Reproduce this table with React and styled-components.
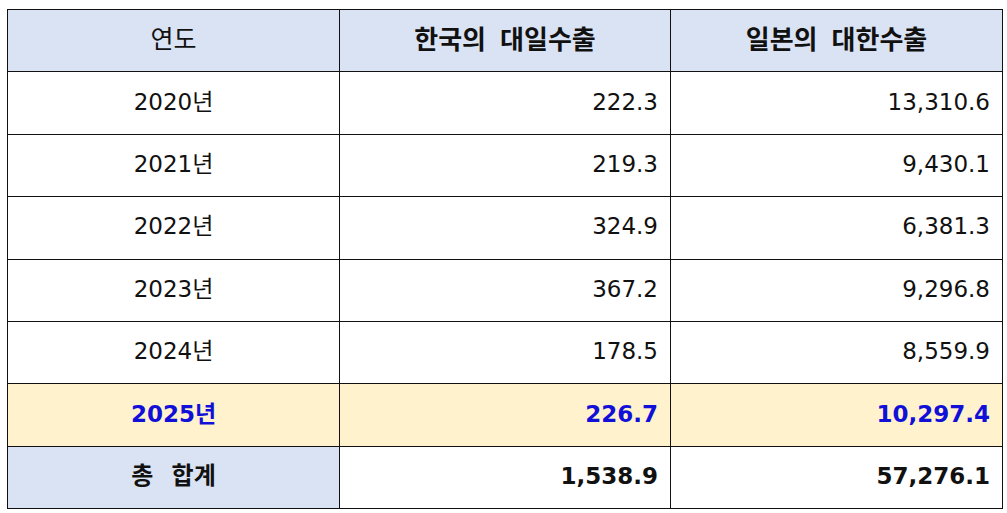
import React from 'react'
import styled, { createGlobalStyle } from 'styled-components'

const HEADER_BG = '#dae3f3'
const HIGHLIGHT_BG = '#fff2cc'
const BLUE = '#1010d8'

const GlobalStyle = createGlobalStyle({
  'html, body': {
    margin: 0,
    padding: 0,
    background: '#ffffff',
  },
  body: {
    fontFamily: '"DejaVu Sans", "Noto Sans CJK KR", sans-serif',
    color: '#111111',
  },
})

const Page = styled.div({
  padding: '9px 5px 0 7px',
})

const Table = styled.table({
  width: 995,
  borderCollapse: 'collapse',
  tableLayout: 'fixed',
})

const Row = styled.tr({
  height: 62.4,
})

const Cell = styled.td(({ $align, $bg, $bold, $blue, $size, $gap }) => ({
  padding: '0 12px 2px',
  border: '1.3px solid #111',
  fontSize: $size || 23,
  lineHeight: 1,
  textAlign: $align || 'center',
  background: $bg || '#ffffff',
  fontWeight: $bold ? 700 : 400,
  color: $blue ? BLUE : '#111111',
  wordSpacing: $gap || 0,
  whiteSpace: 'pre',
}))

// header labels are all hangul, which renders a bit small next to the digits
const HeadCell = styled(Cell).attrs({ as: 'th' })(({ $size }) => ({
  background: HEADER_BG,
  fontSize: $size || 26,
  wordSpacing: 5,
}))

const rows = [
  ['2020년', '222.3', '13,310.6'],
  ['2021년', '219.3', '9,430.1'],
  ['2022년', '324.9', '6,381.3'],
  ['2023년', '367.2', '9,296.8'],
  ['2024년', '178.5', '8,559.9'],
]

const App = () => {
  return (
    <Page>
      <GlobalStyle />
      <Table>
        <colgroup>
          <col style={{ width: 332 }} />
          <col style={{ width: 331 }} />
          <col style={{ width: 332 }} />
        </colgroup>
        <thead>
          <Row>
            <HeadCell $bold={false} $size={25}>연도</HeadCell>
            <HeadCell $bold>한국의 대일수출</HeadCell>
            <HeadCell $bold>일본의 대한수출</HeadCell>
          </Row>
        </thead>
        <tbody>
          {rows.map(([year, kr, jp]) => (
            <Row key={year}>
              <Cell>{year}</Cell>
              <Cell $align="right">{kr}</Cell>
              <Cell $align="right">{jp}</Cell>
            </Row>
          ))}
          <Row>
            <Cell $bg={HIGHLIGHT_BG} $bold $blue>2025년</Cell>
            <Cell $bg={HIGHLIGHT_BG} $bold $blue $align="right">226.7</Cell>
            <Cell $bg={HIGHLIGHT_BG} $bold $blue $align="right">10,297.4</Cell>
          </Row>
          <Row>
            <Cell $bg={HEADER_BG} $bold $size={24} $gap={10}>총 합계</Cell>
            <Cell $bold $align="right">1,538.9</Cell>
            <Cell $bold $align="right">57,276.1</Cell>
          </Row>
        </tbody>
      </Table>
    </Page>
  )
}

export default App
